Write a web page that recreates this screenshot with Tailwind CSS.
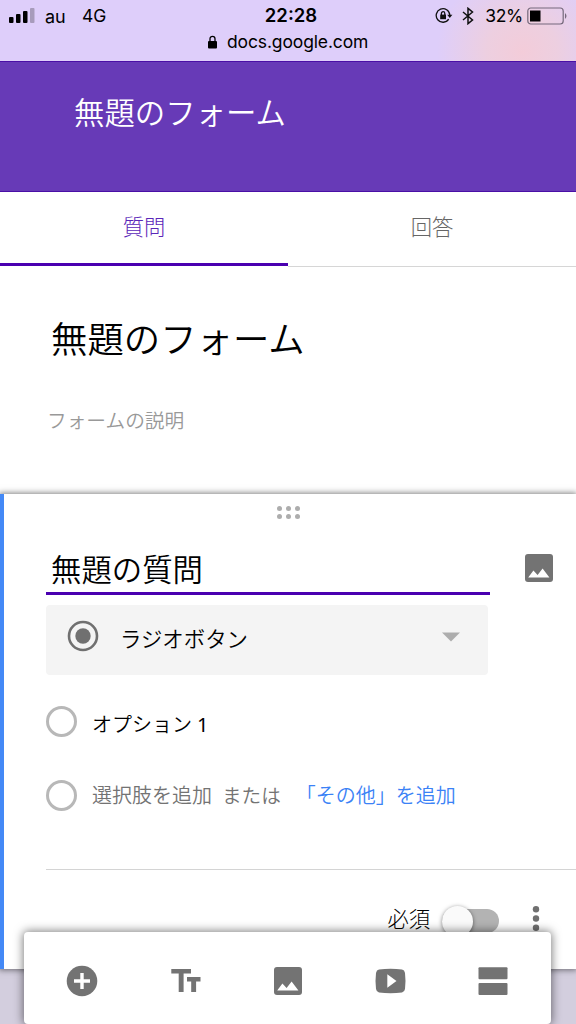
<!DOCTYPE html>
<html lang="ja">
<head>
<meta charset="utf-8">
<title>無題のフォーム</title>
<script src="https://cdn.jsdelivr.net/npm/@tailwindcss/browser@4"></script>
</head>
<body class="relative h-[1024px] w-[576px] overflow-hidden bg-[#d3cede] font-['Noto_Sans_CJK_JP',sans-serif] font-[350] text-black">

<header class="flex h-[61px] flex-col bg-[#decefa] bg-[radial-gradient(circle_at_522px_52px,#f3ccd9_0px,#edcfe0_35px,#decefa00_85px)] font-['Inter',sans-serif] font-normal">
  <div class="flex h-[31px] items-center">
    <div class="flex w-[240px] items-center pl-[9px]">
      <svg class="h-4 w-[26px]" viewBox="0 0 26 16"><rect x="0" y="9" width="4.500" height="6" rx="1"/><rect x="7" y="6" width="4.500" height="9" rx="1"/><rect x="14" y="3" width="4.500" height="12" rx="1"/><rect x="21" y="0" width="4.500" height="15" rx="1" fill="#a79bbb"/></svg>
      <span class="ml-[10px] w-[37px] pt-px text-[18px]">au</span>
      <span class="pt-[2px] text-[17.5px]">4G</span>
    </div>
    <div class="w-[102px] pt-px text-center text-[18.5px] font-semibold">22:28</div>
    <div class="flex flex-1 items-center justify-end pr-[8px]">
      <svg class="mr-[9px] h-[18px] w-[18px]" viewBox="0 0 18 18" fill="none" stroke="#111" stroke-width="1.3"><path d="M13.700 12.200A6.800 6.800 0 1 1 14.800 8"/><path d="M12.200 7.800h5.200l-2.600 3.200z" fill="#111" stroke="none"/><rect x="5.200" y="7.600" width="5.800" height="4.600" fill="#111" stroke="none"/><path d="M6.400 8V6.400a1.700 1.700 0 0 1 3.400 0V8"/></svg>
      <svg class="mr-[11px] h-[18px] w-3" viewBox="0 0 12 18" fill="none" stroke="#111" stroke-width="1.5"><path d="M1 5l9.500 8L6 16.700V1.300L10.500 5 1 13"/></svg>
      <span class="mr-[4px] pt-[2px] text-[17.500px] tracking-[-0.3px]">32%</span>
      <svg class="h-[18px] w-[41px]" viewBox="0 0 41 18"><rect x=".8" y="1" width="35.400" height="16" rx="3" fill="none" stroke="#75697c" stroke-width="1.2"/><rect x="3" y="3.500" width="10.500" height="11"/><path d="M38 6q3 3 0 6z" fill="#75697c"/></svg>
    </div>
  </div>
  <div class="flex h-[21px] items-center pl-[207px]">
    <svg class="mr-[9px] h-[14px] w-[11px]" viewBox="0 0 11 14"><rect x="1" y="6" width="9" height="7.500" rx="1"/><path d="M3 6.500V3.800a2.500 2.500 0 0 1 5 0v2.700" fill="none" stroke="#000" stroke-width="1.300"/></svg>
    <span class="pt-px text-[17.5px] tracking-[-0.13px]">docs.google.com</span>
  </div>
</header>

<div class="h-[131px] border-y border-[#4a0fa6] bg-[#673ab7] pl-[74px] pt-[34px]">
  <div class="h-[30px] text-[30.4px] leading-[30px] text-white">無題のフォーム</div>
</div>

<nav class="flex h-[75px] bg-white text-[21.3px] font-light">
  <div class="mb-px flex flex-1 items-center justify-center border-b-3 border-[#4a00b0] pb-1 text-[#5b27b8]">質問</div>
  <div class="flex flex-1 items-center justify-center border-b border-[#d6d6d6] pb-[7px] text-[#666]">回答</div>
</nav>

<section class="flex h-[227px] flex-col bg-white">
  <h1 class="mt-[52px] h-9 pl-[51px] text-[36.4px] leading-9">無題のフォーム</h1>
  <p class="mt-[55px] h-5 pl-[47px] text-[19.7px] leading-5 text-[#999]">フォームの説明</p>
</section>

<main class="relative h-[475px] border-l-4 border-[#4489f6] bg-white shadow-[0_0_6px_1px_rgba(0,0,0,0.5)]">
  <div class="grid h-[26px] grid-cols-[repeat(3,5px)] content-center justify-center gap-x-1 gap-y-[3px] pr-[3px] pt-[11px]">
    <i class="h-[5px] w-[5px] rounded-full bg-[#adadad]"></i><i class="h-[5px] w-[5px] rounded-full bg-[#adadad]"></i><i class="h-[5px] w-[5px] rounded-full bg-[#adadad]"></i>
    <i class="h-[5px] w-[5px] rounded-full bg-[#adadad]"></i><i class="h-[5px] w-[5px] rounded-full bg-[#adadad]"></i><i class="h-[5px] w-[5px] rounded-full bg-[#adadad]"></i>
  </div>
  <div class="flex h-[75px] pl-[42px]">
    <div class="h-[75px] w-[444px] border-b-3 border-[#4a00b0] pl-[5px] pt-[33px] text-[30.4px] leading-[30px]">無題の質問</div>
    <svg class="ml-[35px] mt-[34px] h-7 w-7" viewBox="0 0 28 28"><rect width="28" height="28" rx="3" fill="#737373"/><path d="M3.200 23.500l5.200-7 4.200 4.500 5-6.500 6.800 9z" fill="#fff"/></svg>
  </div>
  <div class="ml-[42px] mt-[10px] flex h-[70px] w-[442px] items-center rounded bg-[#f4f4f4] pl-[21px] pr-[28px]">
    <svg class="mb-2 h-8 w-8" viewBox="0 0 32 32"><circle cx="16" cy="16" r="14" fill="none" stroke="#707070" stroke-width="2.600"/><circle cx="16" cy="16" r="7.700" fill="#707070"/></svg>
    <span class="mb-1 ml-[21px] flex-1 text-[21.4px] leading-6">ラジオボタン</span>
    <svg class="mb-[6px] h-[10px] w-[18px]" viewBox="0 0 18 10"><path d="M0 .5h18l-9 9z" fill="#adadad"/></svg>
  </div>
  <div class="mt-[30px] flex h-8 items-center pl-[42px]">
    <span class="h-[31px] w-[31px] rounded-full border-3 border-[#b8b8b8]"></span>
    <span class="ml-[15px] mt-[6px] text-[20px] leading-6">オプション<span class="ml-[5px] font-['Noto_Sans',sans-serif] font-normal">1</span></span>
  </div>
  <div class="mt-[42px] flex h-8 items-center pl-[42px] text-[20px] leading-6 text-[#737373]">
    <span class="h-[31px] w-[31px] rounded-full border-3 border-[#b8b8b8]"></span>
    <span class="ml-[15px]">選択肢を追加</span>
    <span class="ml-[10px] text-[19.6px]">または</span>
    <span class="ml-[15px] text-[#3b82f6]">「その他」を追加</span>
  </div>
  <div class="ml-[42px] mt-[58px] flex h-[99px] items-start justify-end border-t border-[#d4d4d4] pr-[36px]">
    <span class="mt-9 text-[21.3px] font-light leading-6">必須</span>
    <div class="ml-[12px] mt-[39px] flex h-6 w-[57px] items-center rounded-full bg-[#b3b3b3]"><span class="h-[31px] w-[31px] shrink-0 rounded-full bg-[#fafafa] shadow-[0_1px_4px_rgba(0,0,0,0.5)]"></span></div>
    <svg class="ml-[33px] mt-9 h-[26px] w-2" viewBox="0 0 8 26" fill="#707070"><circle cx="4" cy="3.300" r="3.200"/><circle cx="4" cy="12.500" r="3.200"/><circle cx="4" cy="21.700" r="3.200"/></svg>
  </div>
</main>

<footer class="absolute left-6 top-[932px] flex h-[92px] w-[527px] items-center rounded-[4px] bg-white pl-[42px] pt-[6px] shadow-[0_0_10px_1px_rgba(0,0,0,0.5)]">
  <svg class="h-8 w-8" viewBox="0 0 32 32"><circle cx="16" cy="16" r="15.300" fill="#737373"/><path d="M14.300 8h3.400v6.300H24v3.400h-6.300V24h-3.400v-6.300H8v-3.400h6.300z" fill="#fff"/></svg>
  <svg class="ml-[73px] h-6 w-[30px]" viewBox="0 0 30 24" fill="#737373"><path d="M.3 0H20v4.500h-7.400V23H7.700V4.500H.3zM16 8h13.500v4.500h-4.400V23h-4.900V12.500H16z"/></svg>
  <svg class="ml-[73px] h-7 w-7" viewBox="0 0 28 28"><rect width="28" height="28" rx="3" fill="#737373"/><path d="M3.200 23.500l5.200-7 4.200 4.500 5-6.500 6.800 9z" fill="#fff"/></svg>
  <svg class="ml-[73px] h-[26px] w-[31px]" viewBox="0 0 31 26"><path d="M4 1.500Q15.500 0 27 1.500q2.500.4 3 3.500 1 8 0 16-.5 3.100-3 3.500-11.500 1.500-23 0-2.500-.4-3-3.500-1-8 0-16Q1.500 1.900 4 1.500z" fill="#737373"/><path d="M12.300 6.300v13.400l9.200-6.700z" fill="#fff"/></svg>
  <svg class="ml-[72px] h-7 w-[30px]" viewBox="0 0 30 28" fill="#737373"><rect x=".5" y=".3" width="29" height="12" rx="1"/><rect x=".5" y="16" width="29" height="12" rx="1"/></svg>
</footer>
</body>
</html>
